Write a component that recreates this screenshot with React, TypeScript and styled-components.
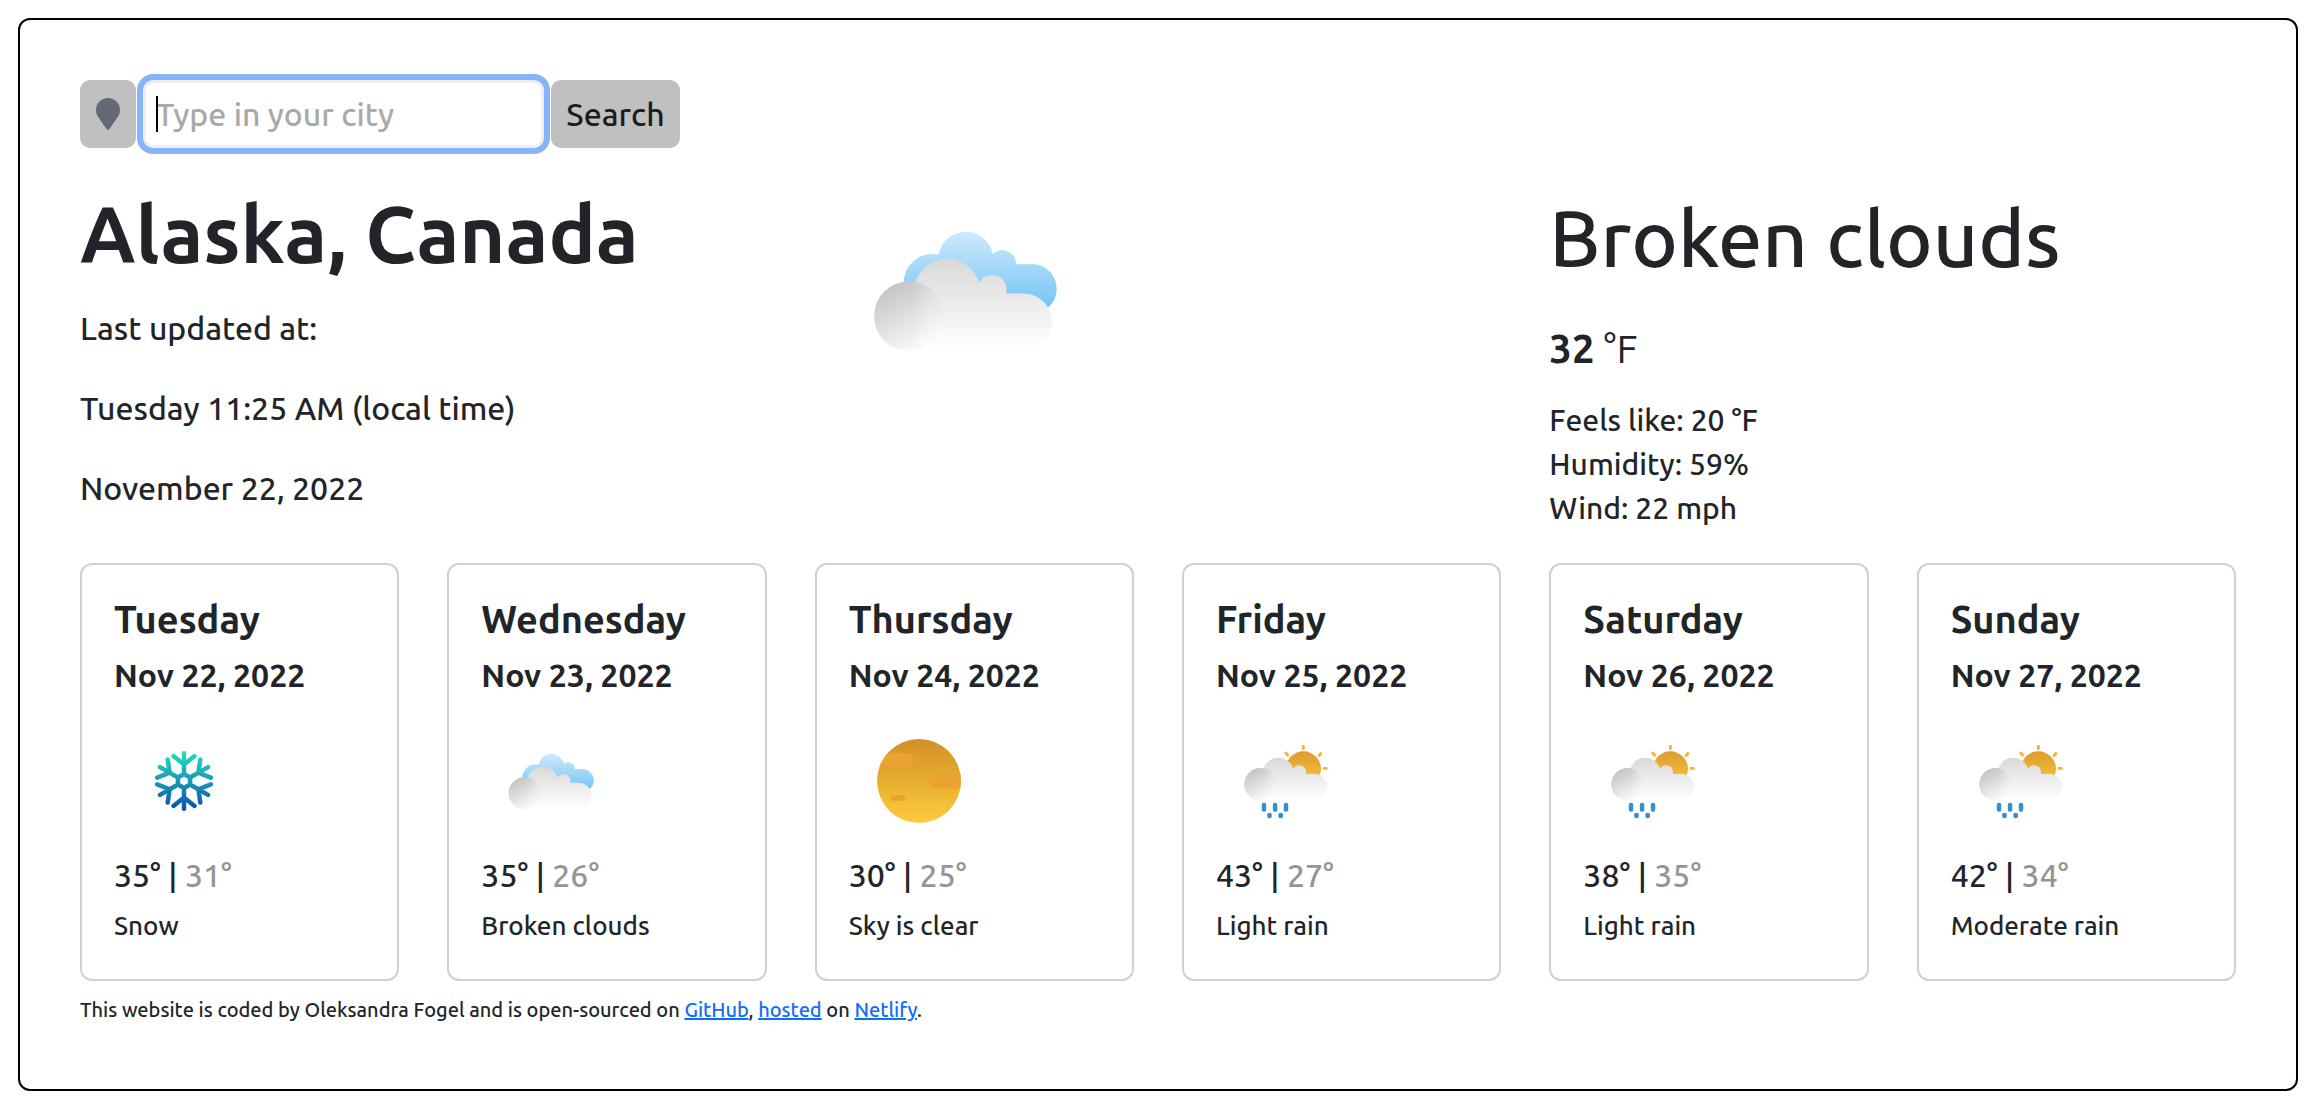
import React, { useId } from "react";
import styled, { createGlobalStyle } from "styled-components";
import { FaMapMarker } from "react-icons/fa";

const GlobalStyle = createGlobalStyle`
  *, *::before, *::after { box-sizing: border-box; }
  body {
    margin: 0;
    background: #fff;
    color: #212529;
    font-family: Ubuntu, "Noto Sans", "Open Sans", sans-serif;
    font-size: 32px;
    font-weight: 500;
    line-height: 48px;
  }
  h1, h2, h3, p, ul { margin: 0; padding: 0; font-weight: inherit; }
  ul { list-style: none; }
`;

const Frame = styled.div`
  margin: 18px;
  padding: 60px 60px 64px;
  border: 2px solid #000;
  border-radius: 12px;
`;

const SearchForm = styled.form`
  display: flex;
  gap: 7px;
  height: 68px;
`;

const FormButton = styled.button<{ $wide?: boolean }>`
  display: flex;
  align-items: center;
  justify-content: center;
  padding: 0 ${(p) => (p.$wide ? 14 : 0)}px;
  min-width: ${(p) => (p.$wide ? 129 : 56)}px;
  border: 0;
  border-radius: 10px;
  background: #c0c0c0;
  color: #1c1c1c;
  font: inherit;
  cursor: pointer;
`;

const Pin = styled(FaMapMarker)`
  width: 24px;
  height: 32px;
  color: #636a76;
`;

const Field = styled.label`
  position: relative;
  display: block;
  width: 401px;
`;

const CityInput = styled.input`
  width: 100%;
  height: 100%;
  padding: 0 10px;
  border: 3px solid #eee;
  border-radius: 10px;
  outline: none;
  box-shadow: 0 0 0 6px #86b4fa;
  background: #fff;
  color: #212529;
  font: inherit;
  caret-color: transparent;
  &::placeholder { color: #a9a9a9; opacity: 1; }
`;

const Caret = styled.span`
  position: absolute;
  left: 13px;
  top: 16px;
  width: 2px;
  height: 36px;
  background: #000;
`;

const Overview = styled.section`
  display: grid;
  grid-template-columns: repeat(3, 1fr);
  column-gap: 48px;
`;

const Place = styled.div`
  display: flex;
  flex-direction: column;
  gap: 32px;
  padding-top: 38px;
`;

const City = styled.h1`
  margin-bottom: -10px;
  font-size: 79px;
  line-height: 96px;
  font-weight: 600;
`;

const HeroIcon = styled.div`
  margin-top: -8px;
  line-height: 0;
`;

const Current = styled.div`
  padding-top: 42px;
`;

const Condition = styled.h2`
  font-size: 79px;
  line-height: 96px;
`;

const Temperature = styled.p`
  margin: 39px 0 25px;
  font-size: 40px;
  font-weight: 400;
  & strong { font-weight: 700; }
`;

const Details = styled.ul`
  font-size: 30px;
  line-height: 44px;
`;

const Forecast = styled.section`
  display: grid;
  grid-template-columns: repeat(6, 1fr);
  gap: 48px;
  margin-top: 33px;
`;

const Card = styled.article`
  padding: 30px 32px 33px;
  border: 2px solid #d0d0d0;
  border-radius: 12px;
`;

const Day = styled.h3`
  font-size: 38px;
  line-height: 48px;
  font-weight: 600;
`;

const DateLine = styled.p`
  margin: 13px 0 17px;
  line-height: 38px;
  font-weight: 600;
`;

const CardIcon = styled.div`
  line-height: 0;
`;

const Low = styled.span`
  color: #959595;
`;

const Summary = styled.p`
  margin-top: 7px;
  font-size: 26px;
  line-height: 40px;
`;

const Footer = styled.footer`
  margin-top: 14px;
  font-size: 20px;
  line-height: 30px;
  & a { color: #0d6efd; }
`;

type Kind = "snow" | "clouds" | "clear" | "rain";

function FrontCloud({ id, dy = 0 }: { id: string; dy?: number }) {
  return (
    <g transform={`translate(0 ${dy})`}>
      <defs>
        <linearGradient id={`${id}f`} gradientUnits="userSpaceOnUse" x1="0" y1="39" x2="0" y2="69">
          <stop offset="0" stopColor="#d8d8d8" />
          <stop offset="1" stopColor="#fff" />
        </linearGradient>
        <linearGradient id={`${id}c`} gradientUnits="userSpaceOnUse" x1="26" y1="48" x2="37" y2="69">
          <stop offset="0" stopColor="#c4c4c4" />
          <stop offset="1" stopColor="#fcfcfc" />
        </linearGradient>
        <linearGradient id={`${id}m`} gradientUnits="userSpaceOnUse" x1="34" y1="0" x2="43" y2="0">
          <stop offset="0" stopColor="#fff" />
          <stop offset="1" stopColor="#fff" stopOpacity="0.3" />
        </linearGradient>
        <mask id={`${id}k`}>
          <rect width="100" height="100" fill={`url(#${id}m)`} />
        </mask>
      </defs>
      <path
        fill={`url(#${id}f)`}
        d="M31.6 69.7V50H33.4A11.1 11.1 0 0 1 55.1 47.2A4.9 4.9 0 0 1 64.1 50.9H70A9.4 9.4 0 0 1 70 69.7Z"
      />
      <g mask={`url(#${id}k)`}>
        <circle cx="31.7" cy="58.4" r="11.6" fill={`url(#${id}c)`} />
      </g>
    </g>
  );
}

function snowflakePath() {
  const at = (angle: number, x: number, r: number) => {
    const px = 50 + x * Math.cos(angle) + r * Math.sin(angle);
    const py = 50 + x * Math.sin(angle) - r * Math.cos(angle);
    return `${px.toFixed(2)} ${py.toFixed(2)}`;
  };
  let d = "";
  for (let i = 0; i < 6; i++) {
    const a = (i * Math.PI) / 3;
    d += `M${at(a, 0, 5)}L${at(a, 0, 19.8)}`;
    d += `M${at(a, -7.5, 17.8)}L${at(a, 0, 11.8)}L${at(a, 7.5, 17.8)}`;
    d += `M${at(a, 0, 5)}L${at(a + Math.PI / 3, 0, 5)}`;
  }
  return d;
}

function WeatherIcon({ kind, size, label }: { kind: Kind; size: number; label: string }) {
  const id = useId().replace(/[^a-zA-Z0-9]/g, "");
  return (
    <svg width={size} height={size} viewBox="0 0 100 100" role="img" aria-label={label}>
      {kind === "snow" && (
        <>
          <defs>
            <linearGradient id={`${id}s`} gradientUnits="userSpaceOnUse" x1="0" y1="29" x2="0" y2="71">
              <stop offset="0" stopColor="#26dec0" />
              <stop offset="0.5" stopColor="#1899b4" />
              <stop offset="1" stopColor="#0f50ab" />
            </linearGradient>
          </defs>
          <path
            d={snowflakePath()}
            fill="none"
            stroke={`url(#${id}s)`}
            strokeWidth="3.2"
            strokeLinecap="round"
            strokeLinejoin="round"
          />
        </>
      )}
      {kind === "clouds" && (
        <g transform="translate(-0.4 0.3)">
          <defs>
            <linearGradient id={`${id}b`} gradientUnits="userSpaceOnUse" x1="0" y1="30.8" x2="0" y2="56">
              <stop offset="0" stopColor="#cbe9fd" />
              <stop offset="1" stopColor="#73c4f3" />
            </linearGradient>
          </defs>
          <path
            fill={`url(#${id}b)`}
            d="M30 48A9.6 9.6 0 0 1 41.6 37.9A9.2 9.2 0 0 1 59.7 37.8A4.5 4.5 0 0 1 67.4 41.1H72A8.2 8.2 0 0 1 77.7 55.8L70 60H34Z"
          />
          <FrontCloud id={id} />
        </g>
      )}
      {kind === "clear" && (
        <>
          <defs>
            <linearGradient id={`${id}g`} x1="0" y1="0" x2="0" y2="1">
              <stop offset="0" stopColor="#d19027" />
              <stop offset="1" stopColor="#fecb3b" />
            </linearGradient>
            <clipPath id={`${id}p`}>
              <circle cx="50" cy="50" r="30" />
            </clipPath>
          </defs>
          <circle cx="50" cy="50" r="30" fill={`url(#${id}g)`} />
          <g clipPath={`url(#${id}p)`} fill="#eba32f">
            <rect x="10" y="30" width="36.4" height="10.2" rx="5.1" />
            <rect x="57" y="45" width="36" height="10.2" rx="5.1" />
            <rect x="30" y="60" width="10.2" height="4.3" rx="2.1" />
          </g>
        </>
      )}
      {kind === "rain" && (
        <>
          <defs>
            <linearGradient id={`${id}g`} x1="0" y1="0" x2="0" y2="1">
              <stop offset="0" stopColor="#dd9b30" />
              <stop offset="1" stopColor="#fbc93a" />
            </linearGradient>
          </defs>
          <circle cx="62.4" cy="41.4" r="12.6" fill={`url(#${id}g)`} />
          <path
            d="M62.4 25.3V27M49.9 30L51.1 31.6M74.9 30.4L73.7 31.8M77.2 41H78.8"
            stroke="#fbb03b"
            strokeWidth="2.1"
            strokeLinecap="round"
          />
          <FrontCloud id={id} dy={-6} />
          <g fill="#2f93c9">
            <rect x="32.7" y="65.6" width="3.2" height="6.3" rx="1.4" />
            <rect x="40.6" y="65.6" width="3.2" height="6.3" rx="1.4" />
            <rect x="48.4" y="65.6" width="3.2" height="6.3" rx="1.4" />
            <rect x="36.5" y="72.6" width="3.4" height="4" rx="1.6" />
            <rect x="44.5" y="72.6" width="3.4" height="4" rx="1.6" />
          </g>
        </>
      )}
    </svg>
  );
}

const days: { day: string; date: string; kind: Kind; high: number; low: number; text: string }[] = [
  { day: "Tuesday", date: "Nov 22, 2022", kind: "snow", high: 35, low: 31, text: "Snow" },
  { day: "Wednesday", date: "Nov 23, 2022", kind: "clouds", high: 35, low: 26, text: "Broken clouds" },
  { day: "Thursday", date: "Nov 24, 2022", kind: "clear", high: 30, low: 25, text: "Sky is clear" },
  { day: "Friday", date: "Nov 25, 2022", kind: "rain", high: 43, low: 27, text: "Light rain" },
  { day: "Saturday", date: "Nov 26, 2022", kind: "rain", high: 38, low: 35, text: "Light rain" },
  { day: "Sunday", date: "Nov 27, 2022", kind: "rain", high: 42, low: 34, text: "Moderate rain" },
];

export default function App() {
  return (
    <>
      <GlobalStyle />
      <Frame>
        <SearchForm onSubmit={(e) => e.preventDefault()}>
          <FormButton type="button" aria-label="Use my location">
            <Pin />
          </FormButton>
          <Field>
            <CityInput type="text" placeholder="Type in your city" aria-label="City" autoFocus />
            <Caret />
          </Field>
          <FormButton type="submit" $wide>
            Search
          </FormButton>
        </SearchForm>

        <Overview>
          <Place>
            <City>Alaska, Canada</City>
            <p>Last updated at:</p>
            <p>Tuesday 11:25 AM (local time)</p>
            <p>November 22, 2022</p>
          </Place>
          <HeroIcon>
            <WeatherIcon kind="clouds" size={300} label="Broken clouds" />
          </HeroIcon>
          <Current>
            <Condition>Broken clouds</Condition>
            <Temperature>
              <strong>32</strong> °F
            </Temperature>
            <Details>
              <li>Feels like: 20 °F</li>
              <li>Humidity: 59%</li>
              <li>Wind: 22 mph</li>
            </Details>
          </Current>
        </Overview>

        <Forecast>
          {days.map((d) => (
            <Card key={d.date}>
              <Day>{d.day}</Day>
              <DateLine>{d.date}</DateLine>
              <CardIcon>
                <WeatherIcon kind={d.kind} size={140} label={d.text} />
              </CardIcon>
              <p>
                {d.high}° | <Low>{d.low}°</Low>
              </p>
              <Summary>{d.text}</Summary>
            </Card>
          ))}
        </Forecast>

        <Footer>
          This website is coded by Oleksandra Fogel and is open-sourced on <a href="#github">GitHub</a>,{" "}
          <a href="#hosted">hosted</a> on <a href="#netlify">Netlify</a>.
        </Footer>
      </Frame>
    </>
  );
}
